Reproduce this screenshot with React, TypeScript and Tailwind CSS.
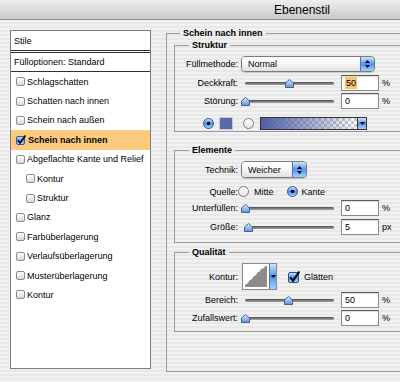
import React from 'react';

const F = "font-['Liberation_Sans',Arial,sans-serif]";

function CheckBox({ checked }: { checked?: boolean }) {
  if (checked)
    return (
      <svg width="10" height="10" viewBox="0 0 10 10" className="shrink-0">
        <defs>
          <linearGradient id="cbg" x1="0" y1="0" x2="0" y2="1">
            <stop offset="0" stopColor="#cfe2fb" />
            <stop offset="0.5" stopColor="#5e9ff0" />
            <stop offset="1" stopColor="#a9d0fa" />
          </linearGradient>
        </defs>
        <rect x="0.5" y="1.5" width="8" height="8" rx="1.5" fill="url(#cbg)" stroke="#35568c" />
        <path d="M2 5.2 L4 8 L9.5 0.5" stroke="#000" strokeWidth="1.6" fill="none" />
      </svg>
    );
  return (
    <span className="block w-[9px] h-[9px] shrink-0 rounded-[2px] border border-[#8c8c8c] bg-linear-to-b from-white to-[#d8d8d8]" />
  );
}

function BigCheck() {
  return (
    <svg width="12" height="12" viewBox="0 0 12 12" className="shrink-0">
      <defs>
        <linearGradient id="bcg" x1="0" y1="0" x2="0" y2="1">
          <stop offset="0" stopColor="#d3e5fb" />
          <stop offset="0.5" stopColor="#4f94ec" />
          <stop offset="1" stopColor="#b2d5fb" />
        </linearGradient>
      </defs>
      <rect x="0.5" y="1.5" width="10" height="10" rx="1.5" fill="url(#bcg)" stroke="#2c4e85" />
      <path d="M2.3 6.3 L5 9.8 L11.3 0.6" stroke="#000" strokeWidth="2" fill="none" />
    </svg>
  );
}

function Radio({ on }: { on?: boolean }) {
  if (on)
    return (
      <svg width="11" height="11" viewBox="0 0 11 11" className="shrink-0">
        <defs>
          <linearGradient id="rg" x1="0" y1="0" x2="0" y2="1">
            <stop offset="0" stopColor="#d5e7fc" />
            <stop offset="0.5" stopColor="#4b91ea" />
            <stop offset="1" stopColor="#b4d7fc" />
          </linearGradient>
        </defs>
        <circle cx="5.5" cy="5.5" r="5" fill="url(#rg)" stroke="#34578f" />
        <circle cx="5.5" cy="5.5" r="1.8" fill="#000" />
      </svg>
    );
  return (
    <svg width="11" height="11" viewBox="0 0 11 11" className="shrink-0">
      <defs>
        <linearGradient id="rw" x1="0" y1="0" x2="0" y2="1">
          <stop offset="0" stopColor="#ffffff" />
          <stop offset="1" stopColor="#e4e4e4" />
        </linearGradient>
      </defs>
      <circle cx="5.5" cy="5.5" r="5" fill="url(#rw)" stroke="#7b7b7b" />
    </svg>
  );
}

function Popup({ cls, text }: { cls: string; text: string }) {
  return (
    <div className={`${cls} flex items-stretch rounded-[4px] border border-[#7a7a7a] overflow-hidden shadow-[0_1px_1px_rgba(0,0,0,0.18)]`}>
      <div className="flex-1 flex items-center pl-[6px] bg-linear-to-b from-white via-[#f6f6f6] to-[#e0e0e0]">{text}</div>
      <div className="w-[14px] border-l border-[#5a76a8] bg-linear-to-b from-[#d3e5fb] via-[#4f93ea] to-[#a8cffa] flex flex-col items-center justify-center gap-[2px]">
        <svg width="5" height="3" viewBox="0 0 5 3"><path d="M0 3 L2.5 0 L5 3Z" fill="#000" /></svg>
        <svg width="5" height="3" viewBox="0 0 5 3"><path d="M0 0 L2.5 3 L5 0Z" fill="#000" /></svg>
      </div>
    </div>
  );
}

function Slider({ pct }: { pct: number }) {
  return (
    <div className="relative w-[97px] h-[16px] shrink-0">
      <div className="absolute left-[4px] right-[4px] top-[7px] h-[3px] rounded-full bg-linear-to-b from-[#4e4e4e] to-[#a9a9a9]" />
      <svg
        width="9"
        height="9"
        viewBox="0 0 9 9"
        className="absolute top-[4px]"
        style={{ left: `${4 + pct * 89 - 4.5}px` }}
      >
        <defs>
          <linearGradient id="tg" x1="0" y1="0" x2="0" y2="1">
            <stop offset="0" stopColor="#e0ecfb" />
            <stop offset="1" stopColor="#5d92d8" />
          </linearGradient>
        </defs>
        <path d="M4.5 0.5 L8.5 4 L8.5 8.5 L0.5 8.5 L0.5 4 Z" fill="url(#tg)" stroke="#3f6399" strokeLinejoin="round" />
      </svg>
    </div>
  );
}

function Input({ children }: { children: React.ReactNode }) {
  return (
    <div className="w-[38px] h-[16px] shrink-0 bg-white border border-[#8a8a8a] border-t-[#5c5c5c] shadow-[inset_0_1px_1px_rgba(0,0,0,0.15)] flex items-center pl-[3px]">
      {children}
    </div>
  );
}

function Label({ children }: { children: React.ReactNode }) {
  return <div className="w-[63px] shrink-0 text-right">{children}</div>;
}

function SliderRow({ label, pct, value, unit, cls }: { label: string; pct: number; value: React.ReactNode; unit: string; cls: string }) {
  return (
    <div className={`${cls} flex items-center h-[16px]`}>
      <Label>{label}</Label>
      <div className="ml-[3px]"><Slider pct={pct} /></div>
      <div className="ml-[3px]"><Input>{value}</Input></div>
      <span className="ml-[3px]">{unit}</span>
    </div>
  );
}

const items: { t: string; active?: boolean; indent?: boolean }[] = [
  { t: 'Schlagschatten' },
  { t: 'Schatten nach innen' },
  { t: 'Schein nach außen' },
  { t: 'Schein nach innen', active: true },
  { t: 'Abgeflachte Kante und Relief' },
  { t: 'Kontur', indent: true },
  { t: 'Struktur', indent: true },
  { t: 'Glanz' },
  { t: 'Farbüberlagerung' },
  { t: 'Verlaufsüberlagerung' },
  { t: 'Musterüberlagerung' },
  { t: 'Kontur' },
];

export default function App() {
  return (
    <div className={`${F} w-[400px] h-[382px] overflow-hidden text-black text-[9px] leading-[12px] bg-[repeating-linear-gradient(180deg,#f1f1f1_0px,#f1f1f1_2px,#e8e8e8_2px,#e8e8e8_4px)]`}>
      <div className="h-[20px] border-b border-[#919191] bg-linear-to-b from-[#efefef] to-[#c9c9c9] flex items-center pl-[274px] text-[12px] leading-[14px]">
        Ebenenstil
      </div>
      <div className="flex items-start pt-[7px] pl-[10px]">
        {/* Left panel */}
        <div className="mt-[3px] w-[141px] h-[339px] shrink-0 bg-white border border-[#7e7e7e]">
          <div className="h-[19px] flex items-center pl-[3px]">Stile</div>
          <div className="h-[3px] border-t border-b border-[#303030]" />
          <div className="h-[19px] flex items-center pl-[3px] border-b border-[#303030]">Fülloptionen: Standard</div>
          {items.map((it, i) => (
            <div
              key={i}
              className={`flex items-center h-[19.4px] ${it.active ? 'bg-[#fdca7d] font-bold' : ''} ${it.indent ? 'pl-[15px]' : 'pl-[5px]'}`}
            >
              <CheckBox checked={it.active} />
              <span className="ml-[2px]">{it.t}</span>
            </div>
          ))}
        </div>

        {/* Right panel */}
        <fieldset className="ml-[15px] w-[260px] h-[345px] shrink-0 border border-[#9a9a9a] pl-[7px]">
          <legend className="ml-[6px] px-[3px] font-bold leading-[12px]">Schein nach innen</legend>

          <fieldset className="w-[240px] border border-[#9a9a9a] pb-[1px]">
            <legend className="ml-[14px] px-[3px] font-bold leading-[12px]">Struktur</legend>
            <div className="mt-[5px] flex items-center h-[16px]">
              <Label>Füllmethode:</Label>
              <Popup cls="ml-[3px] w-[134px] h-[16px]" text="Normal" />
            </div>
            <SliderRow cls="mt-[3px]" label="Deckkraft:" pct={0.5} value={<span className="bg-[#f8c46c] px-[1px]">50</span>} unit="%" />
            <SliderRow cls="mt-[2px]" label="Störung:" pct={0} value="0" unit="%" />
            <div className="mt-[8px] h-[13px] flex items-center pl-[28px]">
              <Radio on />
              <div className="ml-[5px] w-[14px] h-[13px] bg-[#5a68a7] border border-[#c8c8d8]" />
              <div className="ml-[10px]"><Radio /></div>
              <div className="ml-[6px] w-[98px] h-[13px] border border-[#333] bg-[conic-gradient(#cacaca_25%,#ffffff_0_50%,#cacaca_0_75%,#ffffff_0)] bg-[length:6px_6px]">
                <div className="w-full h-full bg-linear-to-r from-[#4f5fa5] via-[#5565a8]/55 to-transparent" />
              </div>
              <div className="w-[9px] h-[13px] border border-l-0 border-[#333] bg-linear-to-b from-[#d3e5fb] via-[#4f93ea] to-[#a8cffa] flex items-center justify-center">
                <svg width="5" height="3" viewBox="0 0 5 3"><path d="M0 0 L2.5 3 L5 0Z" fill="#000" /></svg>
              </div>
            </div>
          </fieldset>

          <fieldset className="mt-[12px] w-[240px] border border-[#9a9a9a] pb-[7px]">
            <legend className="ml-[14px] px-[3px] font-bold leading-[12px]">Elemente</legend>
            <div className="mt-[5px] flex items-center h-[17px]">
              <Label>Technik:</Label>
              <Popup cls="ml-[3px] w-[66px] h-[17px]" text="Weicher" />
            </div>
            <div className="mt-[8px] flex items-center h-[11px]">
              <Label>Quelle:</Label>
              <Radio />
              <span className="ml-[5px]">Mitte</span>
              <div className="ml-[13px]"><Radio on /></div>
              <span className="ml-[4px]">Kante</span>
            </div>
            <SliderRow cls="mt-[3px]" label="Unterfüllen:" pct={0} value="0" unit="%" />
            <SliderRow cls="mt-[3px]" label="Größe:" pct={0.04} value="5" unit="px" />
          </fieldset>

          <fieldset className="mt-[3px] w-[240px] border border-[#9a9a9a] pb-[5px]">
            <legend className="ml-[14px] px-[3px] font-bold leading-[12px]">Qualität</legend>
            <div className="mt-[5px] flex items-center h-[27px]">
              <Label>Kontur:</Label>
              <div className="ml-[4px] w-[35px] h-[27px] flex border border-[#8a8a8a] bg-white">
                <div className="flex-1 p-[2px]">
                  <svg width="22" height="21" viewBox="0 0 22 21" className="block">
                    <path
                      d="M0 21 L0 19 L3 17 L4 15 L7 13 L8 11 L11 9 L12 7 L15 5 L16 3 L19 2 L20 0 L22 0 L22 21 Z"
                      fill="#8c8c8c"
                    />
                  </svg>
                </div>
                <div className="w-[8px] border-l border-[#5a76a8] bg-linear-to-b from-[#d3e5fb] via-[#4f93ea] to-[#a8cffa] flex items-center justify-center">
                  <svg width="5" height="3" viewBox="0 0 5 3"><path d="M0 0 L2.5 3 L5 0Z" fill="#000" /></svg>
                </div>
              </div>
              <div className="ml-[11px]"><BigCheck /></div>
              <span className="ml-[4px]">Glätten</span>
            </div>
            <SliderRow cls="mt-[2px]" label="Bereich:" pct={0.49} value="50" unit="%" />
            <SliderRow cls="mt-[2px]" label="Zufallswert:" pct={0} value="0" unit="%" />
          </fieldset>
        </fieldset>
      </div>
    </div>
  );
}
